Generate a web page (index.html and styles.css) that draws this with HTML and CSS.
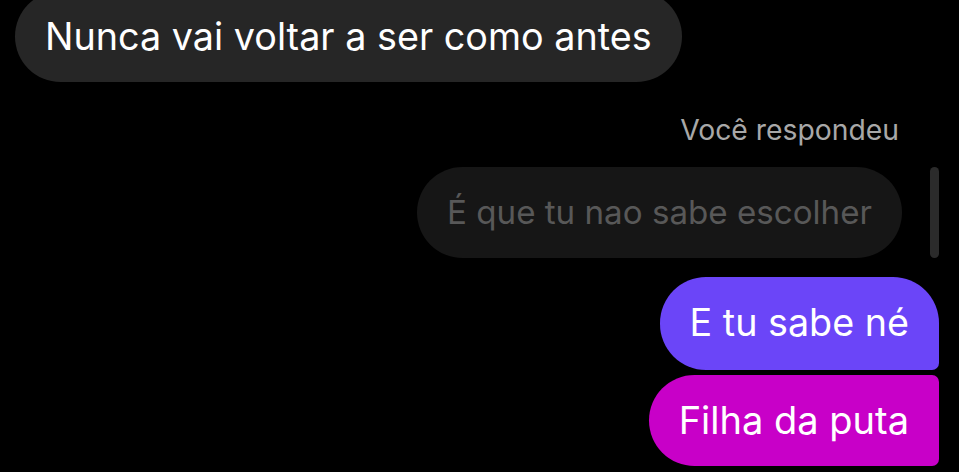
FILE: index.html
```html
<!DOCTYPE html>
<html lang="pt">
<head>
    <meta charset="UTF-8">
    <meta name="viewport" content="width=device-width, initial-scale=1.0">
    <title>Conversa</title>
    <link rel="stylesheet" href="styles.css">
</head>
<body>
    <div class="thread">
        <div class="row row-in">
            <div class="bubble bubble-in">Nunca vai voltar a ser como antes</div>
        </div>

        <div class="reply-label">Você respondeu</div>
        <div class="reply">
            <div class="bubble bubble-quote">É que tu nao sabe escolher</div>
            <div class="reply-bar"></div>
        </div>

        <div class="row row-out">
            <div class="bubble bubble-out first">E tu sabe né</div>
        </div>
        <div class="row row-out">
            <div class="bubble bubble-out last">Filha da puta</div>
        </div>
    </div>
</body>
</html>
```

FILE: styles.css
```css
body {
    margin: 0;
    background-color: #000;
    font-family: Inter, Roboto, "Noto Sans", sans-serif;
    overflow: hidden;
}
.thread {
    display: flex;
    flex-direction: column;
    padding: 0 20px 0 15px;
    margin-top: -9px;
}
.row {
    display: flex;
}
.row-in {
    justify-content: flex-start;
}
.row-out {
    justify-content: flex-end;
}
.bubble {
    font-size: 38px;
    line-height: 45px;
    padding: 23px 30px;
    border-radius: 46px;
    color: #fff;
    white-space: nowrap;
}
.bubble-in {
    background-color: #262626;
    font-size: 37.75px;
}
.reply-label {
    align-self: flex-end;
    margin: 32px 40px 0 0;
    color: #a8a8a8;
    font-size: 28.3px;
    line-height: 32px;
}
.reply {
    display: flex;
    justify-content: flex-end;
    align-items: stretch;
    gap: 28px;
    margin-top: 21px;
}
.bubble-quote {
    background-color: #161616;
    color: #585858;
    font-size: 33.15px;
}
.reply-bar {
    width: 9px;
    border-radius: 5px;
    background-color: #2b2b2b;
}
.bubble-out {
    background-color: #6b45f8;
}
.bubble-out.first {
    margin-top: 19px;
    padding-bottom: 25px;
    font-size: 37.7px;
    border-bottom-right-radius: 7px;
}
.bubble-out.last {
    margin-top: 5px;
    background-color: #c800c8;
    border-top-right-radius: 7px;
    border-bottom-right-radius: 7px;
}
```
